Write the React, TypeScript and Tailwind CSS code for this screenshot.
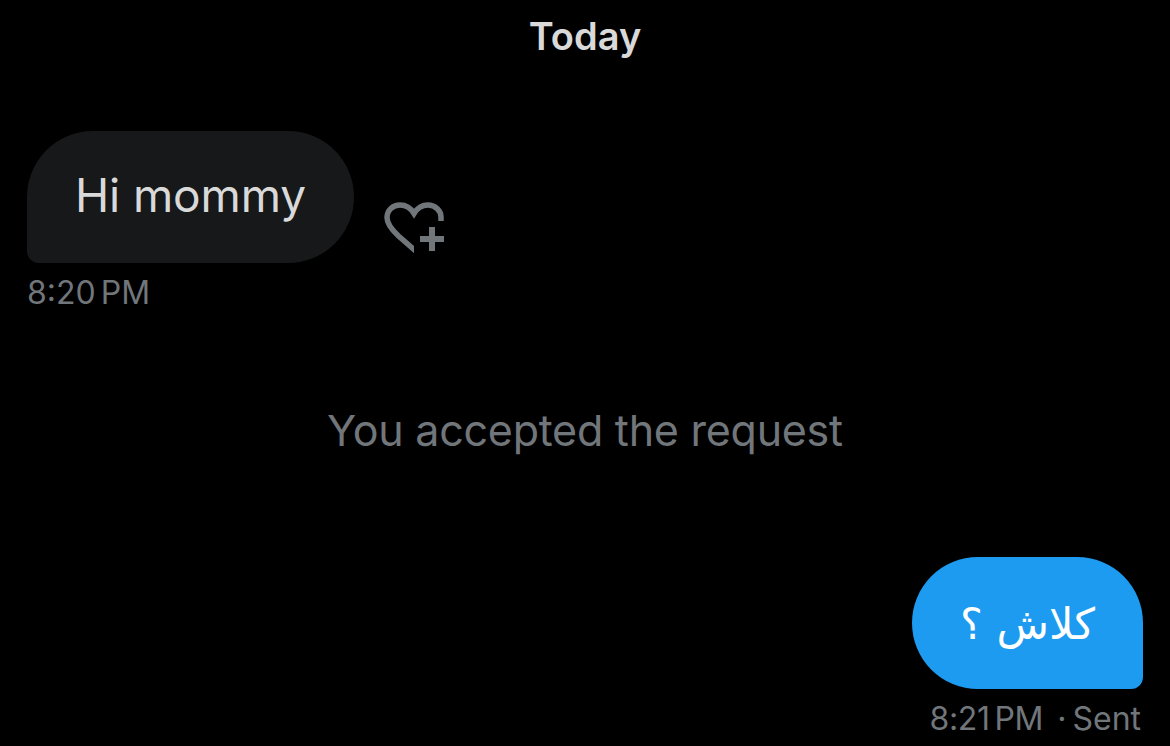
const FONT = "font-['Inter','Liberation_Sans','DejaVu_Sans',sans-serif]";

function HeartPlus() {
  return (
    <svg width="60" height="52" viewBox="0 0 60 52" fill="none" className="text-[#71767b]">
      <clipPath id="heart-cut">
        <path d="M0 0 H60 V24 H30 V52 H0 Z" />
      </clipPath>
      <path
        clipPath="url(#heart-cut)"
        d="M34 51 L14.5 34 C7.5 27.5 3 22 3 15.5 C3 8 9 3 16 3 C22 3 27 6.5 30 11.5 C33 6.5 38 3 44 3 C51.5 3 57 9 57 15 L57 19"
        stroke="currentColor"
        strokeWidth="5.5"
      />
      <path d="M36 37 H60 M48 25 V49" stroke="currentColor" strokeWidth="6" />
    </svg>
  );
}

export default function App() {
  return (
    <div className={`flex h-[746px] w-[1170px] flex-col overflow-hidden bg-black px-[27px] ${FONT}`}>
      <div className="pt-[14px] text-center text-[38px] leading-[44px] font-semibold text-[#d9d9d9]">Today</div>

      <div className="mt-[73px] flex items-end">
        <div className="flex h-[132px] w-[327px] items-center justify-center rounded-[66px] rounded-bl-[12px] bg-[#16181a] pb-[3px] text-[46px] tracking-[-0.1px] text-[#d9d9d9]">
          Hi mommy
        </div>
        <div className="mb-[9px] ml-[30px]">
          <HeartPlus />
        </div>
      </div>
      <div className="mt-[10px] text-[32px] leading-[40px] text-[#71767b] [word-spacing:-4px]">8:20 PM</div>

      <div className="mt-[91px] text-center text-[43px] leading-[52px] tracking-[-0.25px] text-[#71767b]">You accepted the request</div>

      <div className="mt-[101px] flex flex-col items-end">
        <div
          dir="rtl"
          className="flex h-[132px] w-[231px] items-center justify-center rounded-[66px] rounded-br-[12px] bg-[#1d9bf0] pt-[3px] font-['DejaVu_Sans',sans-serif] text-[43px] text-white"
        >
          كلاش ؟
        </div>
        <div className="mt-[10px] flex pr-[2px] text-[32px] leading-[40px] text-[#71767b]">
          <span className="tracking-[-0.3px] [word-spacing:-4px]">8:21 PM</span>
          <span className="ml-[14px] mr-[6px]">·</span>
          <span>Sent</span>
        </div>
      </div>
    </div>
  );
}
